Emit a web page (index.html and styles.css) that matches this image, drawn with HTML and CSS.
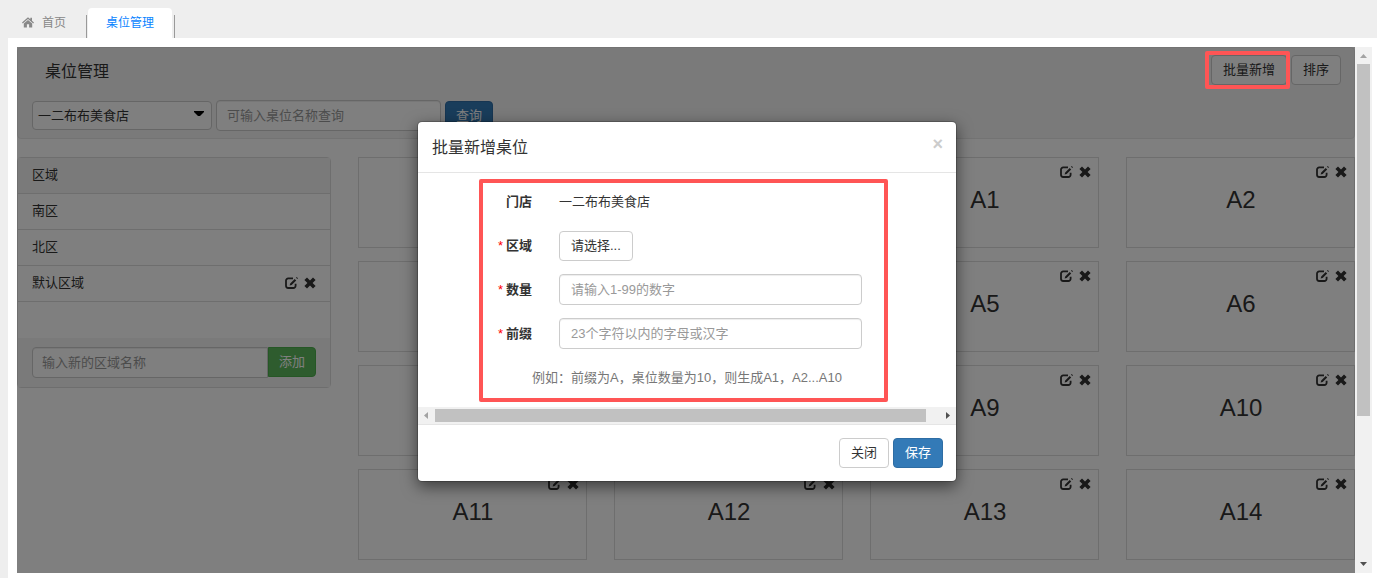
FILE: index.html
```html
<!DOCTYPE html>
<html lang="zh-CN">
<head>
<meta charset="utf-8">
<meta name="viewport" content="width=device-width, initial-scale=1">
<title>桌位管理</title>
<link rel="stylesheet" href="styles.css">
</head>
<body>
<svg class="sprite" aria-hidden="true">
  <symbol id="i-edit" viewBox="0 0 13 12">
    <path d="M8 1.400H3.200A2.200 2.200 0 0 0 1 3.600V8.800A2.200 2.200 0 0 0 3.200 11H8.400A2.200 2.200 0 0 0 10.600 8.800V6.800" fill="none" stroke="currentColor" stroke-width="1.800"/>
    <path d="M4.600 8.600L5.200 6.500L9.700 2L11.200 3.500L6.700 8Z M11 .7L11.700 0L13 1.300L12.300 2Z" fill="currentColor"/>
  </symbol>
  <symbol id="i-remove" viewBox="0 0 12 12">
    <path d="M3 .4L6 3.400L9 .4L11.600 3L8.600 6L11.600 9L9 11.600L6 8.600L3 11.600L.4 9L3.400 6L.4 3Z" fill="currentColor"/>
  </symbol>
</svg>

<nav class="tabs">
  <a class="tab" href="#home">
    <svg class="home" viewBox="0 0 12 11" aria-hidden="true"><path d="M6 .3L0 5.500L.8 6.400L6 2L11.200 6.400L12 5.500L10 3.800V.8H8.300V2.300Z M6 2.900L1.800 6.400V10.500H4.900V7.300H7.100V10.500H10.200V6.400Z" fill="currentColor"/></svg>首页</a>
  <a class="tab tab-active" href="#tables">桌位管理</a>
</nav>

<main class="panel">
  <div class="frame">
    <div class="view">
      <header class="toolbar">
        <div class="toolbar-top">
          <h1 class="title">桌位管理</h1>
          <div class="actions">
            <div class="marked"><button class="btn" type="button">批量新增</button><span class="mark mark-button"></span></div>
            <button class="btn" type="button">排序</button>
          </div>
        </div>
        <form class="search">
          <div class="select-wrap">
            <select class="shop-select" aria-label="门店"><option>一二布布美食店</option></select>
            <svg class="caret" viewBox="0 0 10 6" aria-hidden="true"><path d="M0 0H10V1L6 5H4L0 1Z"/></svg>
          </div>
          <input class="input search-input" type="text" aria-label="桌位名称" placeholder="可输入桌位名称查询">
          <button class="btn btn-primary btn-search" type="button">查询</button>
        </form>
      </header>

      <div class="columns">
        <aside class="areas">
          <h2 class="areas-head">区域</h2>
          <ul class="area-list">
            <li class="area">南区</li>
            <li class="area">北区</li>
            <li class="area">默认区域
              <span class="tools">
                <button class="icon-btn" type="button" aria-label="编辑"><svg class="i-edit"><use href="#i-edit"/></svg></button>
                <button class="icon-btn" type="button" aria-label="删除"><svg class="i-remove"><use href="#i-remove"/></svg></button>
              </span>
            </li>
          </ul>
          <form class="area-add">
            <input class="input area-input" type="text" aria-label="新的区域名称" placeholder="输入新的区域名称">
            <button class="btn btn-success" type="button">添加</button>
          </form>
        </aside>

        <section class="cards" id="cards"></section>
      </div>

      <div class="backdrop"></div>
      <section class="modal" role="dialog" aria-labelledby="modal-title">
        <header class="modal-head">
          <h2 class="title" id="modal-title">批量新增桌位</h2>
          <button class="close" type="button" aria-label="关闭">×</button>
        </header>
        <form class="modal-body">
          <div class="row">
            <span class="label">门店</span>
            <span>一二布布美食店</span>
          </div>
          <div class="row">
            <label class="label" for="area"><span class="star">*</span>区域</label>
            <select class="pick" id="area"><option>请选择...</option></select>
          </div>
          <div class="row">
            <label class="label" for="count"><span class="star">*</span>数量</label>
            <input class="input" id="count" type="text" placeholder="请输入1-99的数字">
          </div>
          <div class="row">
            <label class="label" for="prefix"><span class="star">*</span>前缀</label>
            <input class="input" id="prefix" type="text" placeholder="23个字符以内的字母或汉字">
          </div>
          <p class="help">例如：前缀为A，桌位数量为10，则生成A1，A2...A10</p>
          <span class="mark mark-form"></span>
        </form>
        <div class="hscroll" aria-hidden="true">
          <svg class="arrow" viewBox="0 0 17 17"><path d="M10 5V12L6 8.500Z" fill="#a3a3a3"/></svg>
          <span class="hthumb"></span>
          <svg class="arrow" viewBox="0 0 17 17"><path d="M7 5V12L11 8.500Z" fill="#505050"/></svg>
        </div>
        <footer class="modal-foot">
          <button class="btn" type="button">关闭</button>
          <button class="btn btn-primary" type="button">保存</button>
        </footer>
      </section>
    </div>
    <div class="vscroll" aria-hidden="true">
      <svg class="arrow" viewBox="0 0 17 17"><path d="M5 11H12L8.500 7Z" fill="#a3a3a3"/></svg>
      <span class="vthumb"></span>
      <svg class="arrow" viewBox="0 0 17 17"><path d="M5 6H12L8.500 10Z" fill="#505050"/></svg>
    </div>
  </div>
</main>
<script src="cards.js"></script>
</body>
</html>
```
FILE: cards.js
```js
const names = ['', '', 'A1', 'A2', '', '', 'A5', 'A6', '', '', 'A9', 'A10', 'A11', 'A12', 'A13', 'A14'];
document.getElementById('cards').innerHTML = names.map(name => `
  <article class="card">
    ${name && `<span class="tools">
      <button class="icon-btn" type="button" aria-label="编辑"><svg class="i-edit"><use href="#i-edit"/></svg></button>
      <button class="icon-btn" type="button" aria-label="删除"><svg class="i-remove"><use href="#i-remove"/></svg></button>
    </span>
    <h3 class="card-name">${name}</h3>`}
  </article>`).join('');
```
FILE: styles.css
```css
* { box-sizing: border-box; }

body {
  margin: 0;
  min-height: 100vh;
  display: flex;
  flex-direction: column;
  background: #eee;
  color: #333;
  font: 13px/18px "Liberation Sans", "Noto Sans CJK SC", sans-serif;
}

h1, h2, h3, p, ul { margin: 0; padding: 0; font-weight: 400; }
button, input, select { font: inherit; color: inherit; margin: 0; }
.sprite { position: absolute; width: 0; height: 0; }

/* Tabs */
.tabs { display: flex; align-items: flex-end; height: 38px; padding-left: 22px; }
.tab {
  display: flex;
  align-items: center;
  height: 23px;
  padding: 0 20px 8px 0;
  border-right: 1px solid #999;
  color: #888;
  font-size: 12px;
  text-decoration: none;
}
.home { width: 12px; height: 11px; margin-right: 8px; }
.tab-active {
  height: 30px;
  margin-left: 1px;
  padding: 0 18px 1px;
  border: 0;
  border-radius: 4px 4px 0 0;
  background: #fff;
  color: #0a84ff;
}
.tabs::after { content: ""; width: 1px; height: 23px; margin-left: 2px; background: #999; }

.panel {
  flex: 1;
  display: flex;
  margin-left: 8px;
  padding: 9px 5px 5px 9px;
  background: #fff;
}
.frame { flex: 1; display: flex; }
.view { flex: 1; position: relative; padding-bottom: 13px; }

/* Toolbar */
.toolbar {
  padding: 7px 13px 7px 14px;
  border: 1px solid #e7e7e7;
  border-radius: 4px;
  background: #f5f5f5;
}
.toolbar-top { display: flex; justify-content: space-between; padding-left: 13px; }
.title { height: 32px; font-size: 16px; line-height: 34px; }
.actions { display: flex; align-items: flex-start; gap: 4px; }
.marked { display: flex; position: relative; }
.search { display: flex; align-items: center; gap: 4px; margin-top: 13px; }
.select-wrap { position: relative; width: 180px; }
.shop-select {
  display: block;
  appearance: none;
  width: 100%;
  height: 29px;
  padding: 0 5px;
  border: 1px solid #ccc;
  border-radius: 4px;
  background: #fff;
}
.caret { position: absolute; right: 8px; top: 10px; width: 10px; height: 6px; }

.btn {
  height: 30px;
  padding: 0 11px;
  border: 1px solid #ccc;
  border-radius: 4px;
  background: #fff;
  white-space: nowrap;
}
.btn-primary { border-color: #2e6da4; background: #337ab7; color: #fff; }
.btn-search { padding: 0 10px; }
.btn-success {
  padding: 0 10px;
  border-color: #4cae4c;
  border-radius: 0 4px 4px 0;
  background: #5cb85c;
  color: #fff;
}

.input {
  width: 100%;
  height: 31px;
  padding: 0 11px;
  border: 1px solid #ccc;
  border-radius: 4px;
  background: #fff;
  box-shadow: inset 0 1px 1px rgba(0, 0, 0, .075);
}
.input::placeholder { color: #999; opacity: 1; }
.search-input { width: 225px; padding: 0 10px; }

/* Areas */
.columns { display: flex; align-items: flex-start; gap: 27px; margin-top: 18px; }
.areas { flex: 0 0 314px; border: 1px solid #ddd; border-radius: 4px; background: #fff; }
.areas-head { padding: 8px 14px 9px; background: #f5f5f5; font-size: 13px; }
.area-list { list-style: none; padding-bottom: 36px; }
.area {
  display: flex;
  justify-content: space-between;
  height: 36px;
  padding: 8px 14px 9px;
  border-top: 1px solid #ddd;
}
.area:last-child { height: 37px; border-bottom: 1px solid #ddd; }
.area-add { display: flex; padding: 9px 14px; background: #f5f5f5; }
.area-input { border-radius: 4px 0 0 4px; padding: 0 9px; }

.tools { display: flex; align-items: center; gap: 6px; }
.icon-btn { display: flex; padding: 0; border: 0; background: none; }
.i-edit { width: 13px; height: 12px; }
.i-remove { width: 12px; height: 12px; }

/* Table cards */
.cards { flex: 1; display: grid; grid-template-columns: repeat(4, 1fr); gap: 14px 27px; }
.card { height: 91px; padding: 5px 7px 8px 8px; border: 1px solid #ddd; text-align: center; }
.cards { row-gap: 13px; }
.card .tools { justify-content: flex-end; height: 18px; }
.card-name { font-size: 24px; line-height: 38px; }

/* Dialog */
.backdrop { position: absolute; inset: 0; background: rgba(0, 0, 0, .5); }
.mark { position: absolute; border: 4px solid #ff5555; border-radius: 2px; pointer-events: none; }
.mark-button { inset: -4px -3px -4px -6px; z-index: 2; }
.modal {
  position: absolute;
  top: 74px;
  left: 50%;
  width: 540px;
  margin-left: -269px;
  border: 1px solid rgba(0, 0, 0, .2);
  border-radius: 5px;
  background: #fff;
  background-clip: padding-box;
  box-shadow: 0 5px 15px rgba(0, 0, 0, .5);
}
.modal-head {
  display: flex;
  justify-content: space-between;
  padding: 9px 13px 9px 14px;
  border-bottom: 1px solid #e5e5e5;
}
.close {
  height: 26px;
  padding: 0;
  border: 0;
  background: none;
  color: #ccc;
  font-size: 18px;
  font-weight: 700;
  line-height: 26px;
}
.modal-body { position: relative; padding: 13px 94px 13px 74px; }
.row { display: grid; grid-template-columns: 40px 303px; gap: 27px; align-items: center; height: 31px; margin-bottom: 13px; }
.label { text-align: right; font-weight: 700; }
.star { margin-right: 3px; color: #f00; font-weight: 400; }
.pick {
  appearance: none;
  justify-self: start;
  height: 30px;
  padding: 0 11px;
  border: 1px solid #ccc;
  border-radius: 4px;
  background: #fff;
}
.help { padding-left: 40px; color: #777; line-height: 32px; white-space: nowrap; }
.mark-form { inset: 6px 68px 5px 61px; }
.modal-foot { display: flex; justify-content: flex-end; gap: 4px; padding: 13px; border-top: 1px solid #e5e5e5; }

/* Scroll bars */
.arrow { flex: none; width: 17px; height: 17px; }
.hscroll { display: flex; align-items: center; justify-content: space-between; height: 17px; background: #f1f1f1; }
.hthumb { flex: 1; height: 13px; margin-right: 13px; background: #c1c1c1; }
.vscroll { display: flex; flex-direction: column; align-items: center; width: 17px; background: #f1f1f1; }
.vthumb { width: 13px; height: 352px; margin-bottom: auto; background: #c1c1c1; }
```
